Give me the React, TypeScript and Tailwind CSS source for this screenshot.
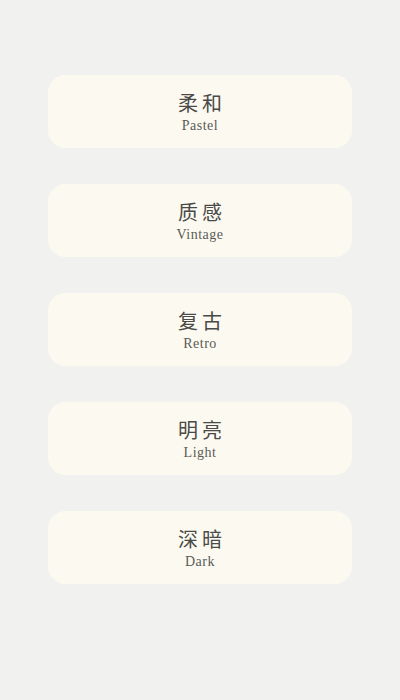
import React from 'react';

const themes = [
  { zh: '柔和', en: 'Pastel' },
  { zh: '质感', en: 'Vintage' },
  { zh: '复古', en: 'Retro' },
  { zh: '明亮', en: 'Light' },
  { zh: '深暗', en: 'Dark' },
];

export default function App() {
  return (
    <div className="min-h-[700px] w-full bg-[#f1f1f0] pt-[75px]">
      <div className="mx-auto flex w-[304px] flex-col gap-[36px]">
        {themes.map((t) => (
          <button
            key={t.en}
            className="flex h-[73px] w-full flex-col items-center justify-center rounded-[18px] bg-[#fcfaf0] pt-[2px]"
          >
            <span className="pl-[4px] text-[20px] leading-[24px] tracking-[4px] text-[#4a4a48] [font-family:'Noto_Sans_CJK_SC',sans-serif]">
              {t.zh}
            </span>
            <span className="mt-[3px] text-[14px] leading-[16px] tracking-[0.5px] text-[#5a5a58] [font-family:'Liberation_Serif',serif]">
              {t.en}
            </span>
          </button>
        ))}
      </div>
    </div>
  );
}
